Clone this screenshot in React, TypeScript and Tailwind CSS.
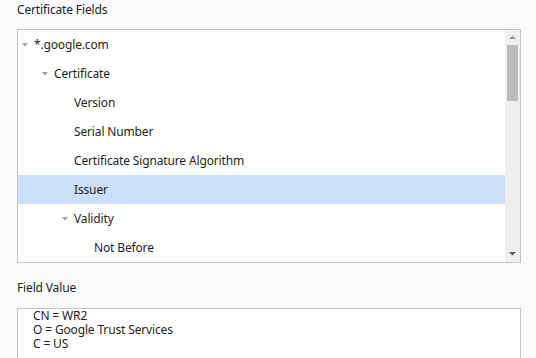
import React from "react";

const rows: { label: string; level: number; expander?: boolean; selected?: boolean }[] = [
  { label: "*.google.com", level: 0, expander: true },
  { label: "Certificate", level: 1, expander: true },
  { label: "Version", level: 2 },
  { label: "Serial Number", level: 2 },
  { label: "Certificate Signature Algorithm", level: 2 },
  { label: "Issuer", level: 2, selected: true },
  { label: "Validity", level: 2, expander: true },
  { label: "Not Before", level: 3 },
];

const indentClass = ["pl-[4px]", "pl-[24px]", "pl-[44px]", "pl-[64px]"];

function Tri() {
  return (
    <svg width="12" height="29" viewBox="0 0 12 29" className="shrink-0">
      <polygon points="0,13 6,13 3,16.5" fill="#9f9f9f" />
    </svg>
  );
}

export default function App() {
  return (
    <div
      className="w-[536px] h-[358px] overflow-hidden bg-[#fafafa] text-[#1e1e1e] text-[12px] tracking-[-0.15px] pl-[17px] pr-[15px]"
      style={{ fontFamily: '"Noto Sans", "DejaVu Sans", sans-serif' }}
    >
      <div className="h-[29px] pt-[1px] leading-[17px]">Certificate Fields</div>
      <div className="h-[234px] border border-[#c4c4c4] bg-white flex">
        <div className="flex-1 flex flex-col overflow-hidden">
          {rows.map((r, i) => (
            <div
              key={i}
              className={`h-[29px] shrink-0 flex items-center ${indentClass[r.level]} ${r.selected ? "bg-[#cbdefa]" : ""}`}
            >
              {r.expander ? <Tri /> : <div className="w-[12px] shrink-0" />}
              <span className="leading-[29px]">{r.label}</span>
            </div>
          ))}
        </div>
        <div className="w-[15px] bg-[#efefef] flex flex-col items-center">
          <svg width="15" height="15" viewBox="0 0 15 15" className="shrink-0">
            <polygon points="4,9 11,9 7.5,5.5" fill="#9a9a9a" />
          </svg>
          <div className="w-[11px] h-[56px] bg-[#bdbdbd]" />
          <div className="flex-1" />
          <svg width="15" height="15" viewBox="0 0 15 15" className="shrink-0">
            <polygon points="4,5 11,5 7.5,8.5" fill="#555" />
          </svg>
        </div>
      </div>
      <div className="h-[45px] pt-[16px] leading-[17px]">Field Value</div>
      <div className="h-[60px] border border-[#c4c4c4] bg-white pl-[15px] leading-[14px]">
        <div>CN = WR2</div>
        <div>O = Google Trust Services</div>
        <div>C = US</div>
      </div>
    </div>
  );
}
